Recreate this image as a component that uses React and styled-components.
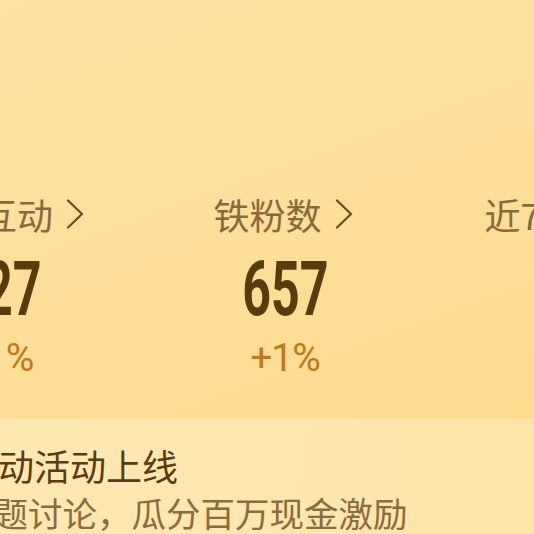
import React from 'react';
import styled, { createGlobalStyle } from 'styled-components';

const GlobalStyle = createGlobalStyle`
  html, body {
    margin: 0;
    padding: 0;
  }
  body {
    font-family: "Noto Sans CJK SC", "Noto Sans", sans-serif;
  }
`;

const Screen = styled.div`
  width: 534px;
  height: 534px;
  overflow: hidden;
  display: flex;
  flex-direction: column;
  background: linear-gradient(160deg, #fee1a3 0%, #fedd97 55%, #ffd98c 100%);
`;

const StatsArea = styled.section`
  flex-shrink: 0;
  height: 419px;
  box-sizing: border-box;
  padding-top: 192px;
`;

const StatsRow = styled.div`
  display: grid;
  grid-template-columns: 285px 288px 310px;
  margin-left: -144px;
`;

const Stat = styled.div`
  display: flex;
  flex-direction: column;
  align-items: center;
`;

const StatLabel = styled.div`
  display: flex;
  align-items: center;
  gap: 13px;
  height: 44px;
  margin-right: 4px;
  font-size: 36px;
  line-height: 44px;
  color: #88693f;
  white-space: nowrap;

  svg {
    width: 18px;
    height: 30px;
    color: #6a4a1e;
  }
`;

const StatValue = styled.div`
  margin-top: 18px;
  height: 70px;
  font-family: "Roboto", "Liberation Sans", sans-serif;
  font-weight: 700;
  font-size: 76px;
  line-height: 70px;
  color: #5c3a10;
  transform: scaleX(0.66);
`;

const StatDelta = styled.div`
  margin-top: 12px;
  font-family: "Roboto", "Liberation Sans", sans-serif;
  font-size: 39px;
  line-height: 44px;
  letter-spacing: -1px;
  color: #c07a1c;
`;

const Banner = styled.section`
  flex: 1;
  padding-top: 22px;
  background: linear-gradient(100deg, #ffe7b3 0%, #ffe6af 60%, #ffe3a7 100%);
`;

const BannerText = styled.div`
  margin-left: -110px;
  white-space: nowrap;
`;

const BannerTitle = styled.div`
  font-size: 36px;
  line-height: 48px;
  color: #5b3a14;
`;

const BannerSub = styled.div`
  font-size: 34.5px;
  line-height: 46px;
  color: #8b6b40;
`;

const Chevron = () => (
  <svg viewBox="0 0 18 30" fill="none" stroke="currentColor" strokeWidth="2.2" strokeLinecap="round" strokeLinejoin="round">
    <polyline points="2,1.5 16,15 2,28.5" />
  </svg>
);

const stats = [
  { label: '粉丝互动', value: '127', delta: '+1%' },
  { label: '铁粉数', value: '657', delta: '+1%' },
  { label: '近7日访客', value: '36', delta: '+3%' },
];

export default function App() {
  return (
    <>
      <GlobalStyle />
      <Screen>
        <StatsArea>
          <StatsRow>
            {stats.map((s) => (
              <Stat key={s.label}>
                <StatLabel>
                  {s.label}
                  <Chevron />
                </StatLabel>
                <StatValue>{s.value}</StatValue>
                <StatDelta>{s.delta}</StatDelta>
              </Stat>
            ))}
          </StatsRow>
        </StatsArea>
        <Banner>
          <BannerText>
            <BannerTitle>春节互动活动上线</BannerTitle>
            <BannerSub>参与话题讨论，瓜分百万现金激励</BannerSub>
          </BannerText>
        </Banner>
      </Screen>
    </>
  );
}
